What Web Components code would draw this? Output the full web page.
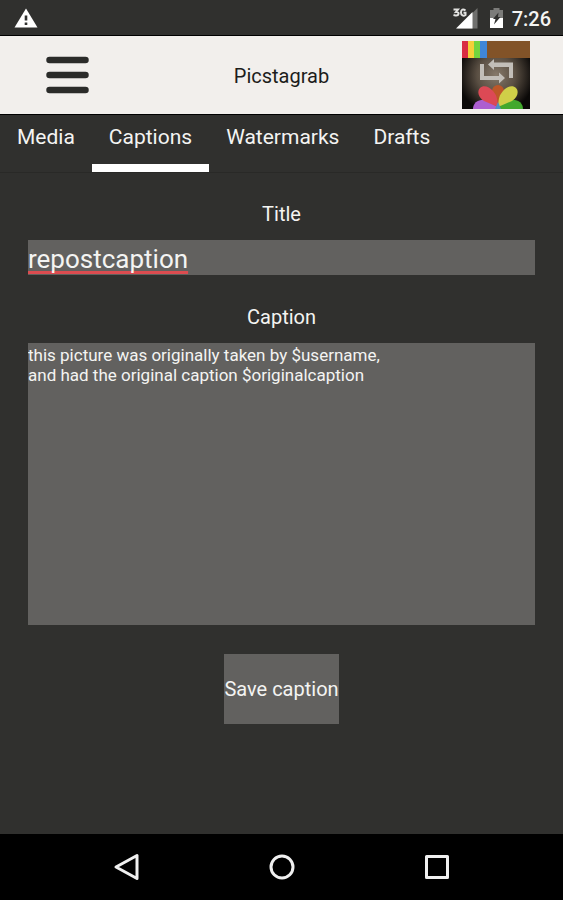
<!DOCTYPE html>
<html lang="en">
<head>
<meta charset="utf-8">
<meta name="viewport" content="width=device-width, initial-scale=1">
<title>Picstagrab</title>
<style>
    :root {
        --bg-color: #30302e;
        --bar-color: #f2efec;
        --field-color: #62615f;
        --text-color: #f4f4f2;
    }
    body {
        margin: 0;
        background: var(--bg-color);
        color: var(--text-color);
        font-family: Roboto, "Noto Sans", sans-serif;
    }
</style>
</head>
<body>
<picsta-app>
    <status-bar slot="status" time="7:26"></status-bar>
    <app-header slot="header">Picstagrab</app-header>
    <tab-bar slot="tabs">
        <tab-item>Media</tab-item>
        <tab-item selected>Captions</tab-item>
        <tab-item>Watermarks</tab-item>
        <tab-item>Drafts</tab-item>
    </tab-bar>
    <caption-form></caption-form>
    <system-nav slot="nav"></system-nav>
</picsta-app>

<script>
// Attach an open shadow root filled with the given markup
function render(host, html) {
    const template = document.createElement('template');
    template.innerHTML = html;
    host.attachShadow({ mode: 'open' }).appendChild(template.content.cloneNode(true));
}

class PicstaApp extends HTMLElement {
    constructor() {
        super();
        render(this, `
            <style>
                :host { display: flex; flex-direction: column; min-height: 100vh; }
                main { flex: 1; }
            </style>
            <slot name="status"></slot>
            <slot name="header"></slot>
            <slot name="tabs"></slot>
            <main><slot></slot></main>
            <slot name="nav"></slot>
        `);
    }
}

class StatusBar extends HTMLElement {
    constructor() {
        super();
        render(this, `
            <style>
                :host {
                    display: flex;
                    align-items: center;
                    height: 35px;
                    padding: 0 12px 0 14px;
                    border-bottom: 1px solid #000;
                }
                svg { display: block; }
                .signal { margin-left: auto; }
                .battery { margin: 0 8px 0 11px; }
                time { font-size: 20px; line-height: 24px; font-weight: 500; padding-top: 2px; }
            </style>
            <svg width="24" height="20" viewBox="0 0 24 20" aria-label="Warning">
                <path d="M12 .5 23.5 19.500H.5Z" fill="#fff"/>
                <path d="M10.700 7.500h2.600v5h-2.600zM10.700 14.500h2.600v2.500h-2.600z" fill="#30302e"/>
            </svg>
            <svg class="signal" width="26" height="22" viewBox="0 0 26 22" aria-label="3G signal">
                <path d="M25.500 1V21.500H5Z" fill="#70706e"/>
                <path d="M20.500 5v16.500H4Z" fill="#fff"/>
                <path d="M1.500 2.500H6L4 5c4-.5 3 4-.5 3.500L1.500 8M13.500 3.500C11 1.500 9 2.500 9 5.500s2.500 4 4.500 2.500V5.800H11.500" fill="none" stroke="#e2e2e0" stroke-width="2"/>
            </svg>
            <svg class="battery" width="15" height="22" viewBox="0 0 15 22" aria-label="Battery charging">
                <path d="M4.500 1h6v2H14v8H1V3h3.500Z" fill="#7c7c7a"/>
                <path d="M1 11h13v10H1Z" fill="#fff"/>
                <path d="M9.500 5.500 4 12h2.500L5 17.500 11.500 10H9Z" fill="#30302e"/>
            </svg>
            <time></time>
        `);
    }

    connectedCallback() {
        this.shadowRoot.querySelector('time').textContent = this.getAttribute('time') || '';
    }
}

class AppHeader extends HTMLElement {
    constructor() {
        super();
        render(this, `
            <style>
                :host {
                    display: grid;
                    grid-template-columns: 1fr auto 1fr;
                    align-items: center;
                    height: 78px;
                    padding: 0 33px;
                    background: var(--bar-color);
                    color: #1d1d1b;
                    border-bottom: 1px solid #000;
                }
                button {
                    justify-self: start;
                    padding: 12px 13px;
                    border: 0;
                    background: none;
                    cursor: pointer;
                }
                svg { display: block; }
                h1 { margin: 0; padding-top: 2px; font-size: 20px; line-height: 24px; font-weight: 400; }
                .logo { justify-self: end; }
            </style>
            <button type="button" aria-label="Menu">
                <svg width="43" height="38" viewBox="0 0 43 38">
                    <path d="M3.500 4h36M3.500 19h36M3.500 34h36" stroke="#2b2b29" stroke-width="6.500" stroke-linecap="round"/>
                </svg>
            </button>
            <h1><slot></slot></h1>
            <svg class="logo" width="68" height="68" viewBox="0 0 68 68" aria-label="Picstagrab logo">
                <defs>
                    <radialGradient id="glow" cx="50%" cy="50%" r="56%">
                        <stop offset="0" stop-color="#86796a"/>
                        <stop offset=".5" stop-color="#5a4f43"/>
                        <stop offset="1" stop-color="#0b0908"/>
                    </radialGradient>
                    <clipPath id="frame"><path d="M0 0h68v68H0z"/></clipPath>
                </defs>
                <g clip-path="url(#frame)">
                    <path d="M0 0h68v68H0z" fill="url(#glow)"/>
                    <path d="M24 0h44v17H24z" fill="#825328"/>
                    <path d="M0 0h6v17H0z" fill="#d92c43"/>
                    <path d="M6 0h6v17H6z" fill="#f3cf38"/>
                    <path d="M12 0h6v17h-6z" fill="#72d43e"/>
                    <path d="M18 0h7v17h-7z" fill="#3f86d8"/>
                    <g fill="#c2beb8">
                        <path d="M26 23.500 32 18v3.500h19V37h-4V26H32v3Z"/>
                        <path d="M18 23h4v12h15v-3.500l6 5.500-6 5.500V39H18Z"/>
                    </g>
                    <!-- petals, round at the tip and narrow at the centre -->
                    <path d="M36 66 30 50a6 6 0 1 1 12 0Z" fill="#bd5728"/>
                    <path d="M36 66 24 59c-8-1-13 3-13 9h25Z" fill="#ad5ed0"/>
                    <path d="M36 66 48 59c8-1 13 3 13 9H36Z" fill="#42a82d"/>
                    <path d="M36 66 22 60C16 56 15 50 18 47s9-2 13 3 4 6 5 16Z" fill="#dc4955"/>
                    <path d="M36 66 50 60c6-4 7-10 4-13s-9-2-13 3-4 6-5 16Z" fill="#d0cf48"/>
                    <path d="M36 61 39 68h-6z" fill="#4f8fc4"/>
                </g>
            </svg>
        `);
    }
}

class TabBar extends HTMLElement {
    constructor() {
        super();
        render(this, `
            <style>
                :host { display: block; border-bottom: 1px solid #292927; }
                nav { display: flex; }
            </style>
            <nav><slot></slot></nav>
        `);
    }
}

class TabItem extends HTMLElement {
    constructor() {
        super();
        render(this, `
            <style>
                :host { display: block; }
                button {
                    display: block;
                    padding: 8px 17px 13px;
                    border: 0;
                    border-bottom: 8px solid transparent;
                    background: none;
                    color: inherit;
                    font: 21px/28px Roboto, "Noto Sans", sans-serif;
                    cursor: pointer;
                }
                :host([selected]) button { border-bottom-color: #fff; }
            </style>
            <button type="button"><slot></slot></button>
        `);
    }

    connectedCallback() {
        this.shadowRoot.querySelector('button').addEventListener('click', () => {
            for (const tab of this.parentElement.children) {
                tab.toggleAttribute('selected', tab === this);
            }
        });
    }
}

class CaptionForm extends HTMLElement {
    constructor() {
        super();
        render(this, `
            <style>
                :host { display: block; padding: 28px; }
                form { display: flex; flex-direction: column; align-items: center; gap: 29px; }
                .field { display: flex; flex-direction: column; gap: 13px; width: 100%; }
                label { font-size: 20px; line-height: 26px; text-align: center; }
                input, textarea, button {
                    box-sizing: border-box;
                    margin: 0;
                    border: 0;
                    border-radius: 0;
                    background: var(--field-color);
                    color: inherit;
                    font-family: inherit;
                }
                input, textarea { display: block; width: 100%; outline: none; }
                input {
                    height: 35px;
                    padding: 3px 0 0;
                    font-size: 26px;
                    line-height: 32px;
                    /* spelling mark */
                    text-decoration: underline 3px #dc4c50;
                    text-decoration-skip-ink: none;
                    text-underline-offset: 3px;
                }
                textarea {
                    padding: 2px 0 0;
                    font-size: 17px;
                    line-height: 20px;
                    resize: none;
                    overflow: auto;
                }
                button { padding: 22px 0; font-size: 20px; line-height: 26px; cursor: pointer; }
            </style>
            <form>
                <div class="field">
                    <label for="title">Title</label>
                    <input id="title" type="text" value="repostcaption" spellcheck="false">
                </div>
                <div class="field">
                    <label for="caption">Caption</label>
                    <textarea id="caption" rows="14" spellcheck="false">this picture was originally taken by $username,
and had the original caption $originalcaption</textarea>
                </div>
                <button type="button">Save caption</button>
            </form>
        `);
    }
}

class SystemNav extends HTMLElement {
    constructor() {
        super();
        render(this, `
            <style>
                :host {
                    display: grid;
                    grid-template-columns: repeat(3, 1fr);
                    justify-items: center;
                    padding: 18px 49px;
                    background: #000;
                }
                button { padding: 0; border: 0; background: none; cursor: pointer; }
                svg { display: block; fill: none; stroke: #f0f0f0; stroke-width: 3; stroke-linejoin: round; }
            </style>
            <button type="button" aria-label="Back">
                <svg width="30" height="30" viewBox="0 0 30 30"><path d="M25 3.500v23L4 15Z"/></svg>
            </button>
            <button type="button" aria-label="Home">
                <svg width="30" height="30" viewBox="0 0 30 30"><circle cx="15" cy="15" r="11"/></svg>
            </button>
            <button type="button" aria-label="Recent apps">
                <svg width="30" height="30" viewBox="0 0 30 30"><path d="M4.500 4.500h21v21h-21z"/></svg>
            </button>
        `);
    }
}

customElements.define('picsta-app', PicstaApp);
customElements.define('status-bar', StatusBar);
customElements.define('app-header', AppHeader);
customElements.define('tab-bar', TabBar);
customElements.define('tab-item', TabItem);
customElements.define('caption-form', CaptionForm);
customElements.define('system-nav', SystemNav);
</script>
</body>
</html>
